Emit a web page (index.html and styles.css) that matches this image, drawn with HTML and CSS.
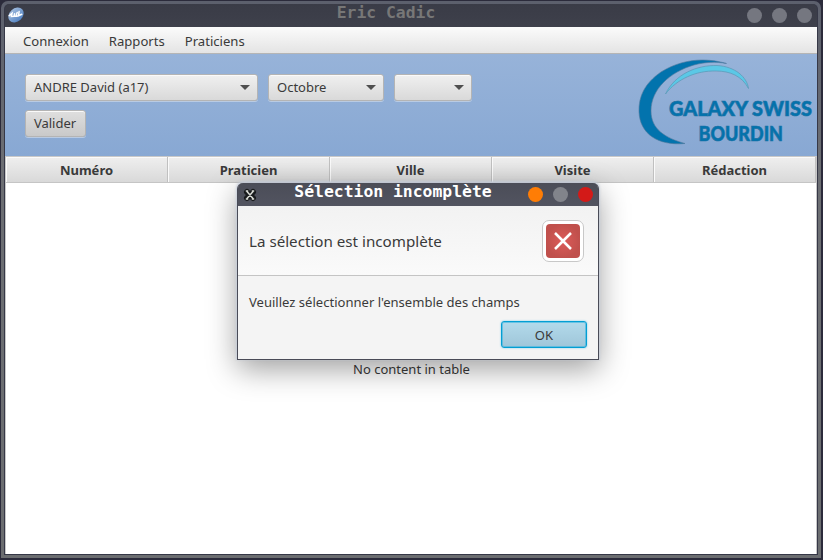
FILE: index.html
```html
<!DOCTYPE html>
<html lang="fr">
<head>
<meta charset="utf-8">
<title>Eric Cadic</title>
<link rel="stylesheet" href="styles.css">
</head>
<body>
<div class="window">
  <div class="frame">
    <header class="titlebar">
      <svg class="app-icon" width="16" height="16" viewBox="0 0 16 16"><defs><linearGradient id="globe" x2="0" y2="1"><stop offset="0" stop-color="#a0bbdd"/><stop offset="1" stop-color="#5484c4"/></linearGradient></defs><ellipse cx="8" cy="8" rx="8.5" ry="6.6" transform="rotate(-43 8 8)" fill="url(#globe)"/><path d="M1.2 8.6 4 6.3 3.4 9.500 6 9.200 6.600 6.800M6.300 9.300 8 9.100 9.200 5.400M8.400 9.300 10.500 8.800 11.100 4.600M11 8.500 13.800 7.200" fill="none" stroke="#fff" stroke-width="1.500" stroke-linecap="round"/></svg>
      <h1>Eric Cadic</h1>
      <div class="dots"><i></i><i></i><i></i></div>
    </header>
    <nav class="menu"><span>Connexion</span><span>Rapports</span><span>Praticiens</span></nav>
    <section class="toolbar">
      <div class="controls">
        <div class="row">
          <div class="combo visitor">ANDRE David (a17)</div>
          <div class="combo month">Octobre</div>
          <div class="combo year"></div>
        </div>
        <button class="btn">Valider</button>
      </div>
      <svg class="logo" width="180" height="90" viewBox="636 56 180 90">
        <path d="M726.5 63.500C704 57 681 59.500 661 72C645 83 638.500 96 639 112C640 134 658 146 685 143.500C665 138 651 129 651 111C651 89 670 72 694 65C705 62 716 61.500 726.500 63.500Z" fill="#0273ad" stroke="#50799c" stroke-width=".6"/>
        <path d="M665.500 94C675 74 697 65 717 65.500C735 66.500 747 77 748.500 88.500C742 76 730 71 716 71C696 70.500 677 79 665.500 94Z" fill="#5bc8e6" stroke="#5c97b5" stroke-width=".7"/>
        <text x="669" y="116.300" textLength="143" lengthAdjust="spacingAndGlyphs">GALAXY SWISS</text>
        <text x="698.500" y="140.500" textLength="84.500" lengthAdjust="spacingAndGlyphs">BOURDIN</text>
      </svg>
    </section>
    <section class="table">
      <div class="thead"><span>Numéro</span><span>Praticien</span><span>Ville</span><span>Visite</span><span>Rédaction</span></div>
      <div class="empty">No content in table</div>
    </section>
  </div>
</div>
<div class="dialog">
  <header class="dialog-title">
    <svg class="x-icon" width="14" height="14" viewBox="0 0 14 14"><path d="M4 4 10 10M10 4 4 10" stroke="#191b1d" stroke-width="6" stroke-linecap="round"/><path d="M4 3.500 10 10.500M10 3.500 4 10.500M2.800 3h2.400M8.800 3h2.400M2.800 11h2.400M8.800 11h2.400" stroke="#d9dbd5" stroke-width="1.500"/></svg>
    <h2>Sélection incomplète</h2>
    <div class="dots"><i class="orange"></i><i class="gray"></i><i class="red"></i></div>
  </header>
  <div class="dialog-head">
    <p>La sélection est incomplète</p>
    <svg width="42" height="42" viewBox="0 0 42 42"><defs><radialGradient id="err"><stop offset="0" stop-color="#dc5b59"/><stop offset="1" stop-color="#c0504c"/></radialGradient></defs><rect x=".5" y=".5" width="41" height="41" rx="6.500" fill="#fff" stroke="#c8c8c8"/><rect x="4" y="4" width="34" height="34" rx="4" fill="url(#err)"/><path d="M13 13 29 29M29 13 13 29" stroke="#fff" stroke-width="2.500"/></svg>
  </div>
  <div class="dialog-body">
    <p>Veuillez sélectionner l'ensemble des champs</p>
    <button class="ok">OK</button>
  </div>
</div>
</body>
</html>
```
FILE: styles.css
```css
* { box-sizing: border-box; }
body {
  margin: 0;
  width: 823px;
  height: 560px;
  padding: 1px 2px 2px 1px;
  overflow: hidden;
  background: #2b2b3b;
  font: 13px/18px "Noto Sans", sans-serif;
  color: #3a3a3a;
}
h1, h2, p { margin: 0; }
.window {
  height: 557px;
  width: 820px;
  padding: 3px;
  border-radius: 7px 7px 0 0;
  background: linear-gradient(#5c606d, #6c6e73 30%, #6b6d70);
}
.frame {
  height: 551px;
  width: 814px;
  padding: 0 1px 1px;
  border-radius: 5px 5px 0 0;
  background: #363847;
  display: flex;
  flex-direction: column;
}
.titlebar {
  height: 23px;
  display: grid;
  grid-template-columns: 80px 1fr 80px;
  background: linear-gradient(#3a3c47, #3e404b);
  border-radius: 5px 5px 0 0;
}
.app-icon { margin: 3px 0 0 3px; }
h1, h2 {
  font: bold 16.4px/18px "DejaVu Sans Mono", monospace;
  text-align: center;
  white-space: pre;
}
h1 { color: #777; margin-left: -50px; }
.dots { display: flex; justify-content: flex-end; gap: 10px; padding: 4px 5px 0 0; }
.dots i { width: 15px; height: 15px; border-radius: 50%; background: #757780; }
.menu {
  height: 27px;
  display: flex;
  gap: 20px;
  padding: 5px 18px 0;
  font-size: 13.1px;
  background: linear-gradient(#fbfbfb, #e4e4e4);
  border-bottom: 1px solid #b5b5b5;
}
.toolbar {
  height: 102px;
  display: flex;
  justify-content: space-between;
  padding: 2px 1px 0 20px;
  background: linear-gradient(#97b3d9, #88a8d3);
}
.controls { padding-top: 18px; display: flex; flex-direction: column; gap: 9px; align-items: flex-start; }
.row { display: flex; gap: 10px; }
.combo, .btn {
  height: 27px;
  border: 1px solid #b4b4b4;
  border-radius: 3px;
  background: linear-gradient(#f0f0f0, #d9d9d9);
  box-shadow: inset 0 1px #fafafa, 0 1px #b9cbe3;
  padding: 2px 8px 4px;
}
.combo { display: flex; justify-content: space-between; align-items: center; }
.combo::after { content: ""; margin: 2px -1px 0 auto; border: 5px solid transparent; border-top-color: #4f4f4f; border-bottom: 0; }
.visitor { width: 233px; }
.month { width: 116px; }
.year { width: 78px; }
.btn {
  font: inherit;
  line-height: 17px;
  color: inherit;
  width: 61px;
  padding: 0 1px 0 0;
  background: linear-gradient(#dfdfdf, #c9c9c9);
}
.logo text { font: 900 20.5px "Lato", sans-serif; fill: #0273ad; stroke: #1d72a5; stroke-width: .7px; }
.table {
  flex: 1;
  border: 1px solid #c8c8c8;
  border-bottom: 0;
  background: #fff;
}
.thead {
  height: 26px;
  display: flex;
  border-bottom: 1px solid #c5c5c5;
  background: linear-gradient(#efefef, #d9d9d9);
}
.thead span {
  width: 162px;
  padding-top: 4px;
  text-align: center;
  font-weight: bold;
  border-right: 1px solid #c0c0c0;
  box-shadow: inset 1px 1px #fafafa;
}
.empty { padding: 177px 0 0 1px; text-align: center; }
.dialog {
  position: absolute;
  left: 237px;
  top: 183px;
  width: 362px;
  height: 177px;
  border: 1px solid #494b57;
  border-top: 0;
  border-radius: 6px 6px 0 0;
  background: #f4f4f4;
  box-shadow: 0 -1px 2px 1px rgba(196, 204, 218, .8), 0 9px 30px rgba(0, 0, 0, .38);
}
.dialog-title {
  height: 23px;
  display: grid;
  grid-template-columns: 40px 1fr 80px;
  border-radius: 5px 5px 0 0;
  background: linear-gradient(#4b4d58, #525460);
  color: #fff;
}
.x-icon { margin: 5px 0 0 5px; }
h2 { margin-left: -10px; }
.orange.orange { background: #ff7d05; }
.gray.gray { background: #82848b; }
.red.red { background: #d31a18; }
.dialog-head {
  height: 70px;
  display: flex;
  justify-content: space-between;
  align-items: center;
  padding: 0 14px 0 11px;
  font-size: 15.17px;
  background: linear-gradient(#f2f2f2, #fafafa);
  border-bottom: 1px solid #c4c4c4;
}
.dialog-body {
  height: 83px;
  padding: 17px 11px 0;
  display: flex;
  flex-direction: column;
  gap: 11px;
  font-size: 13.05px;
}
.ok {
  align-self: flex-end;
  width: 86px;
  height: 27px;
  margin-top: -1px;
  padding: 0;
  font: inherit;
  color: #3a3a3a;
  border: 1px solid #039ed3;
  border-radius: 3px;
  background: linear-gradient(#b3daeb, #9fc6d9);
  box-shadow: inset 0 0 0 1px rgba(53, 180, 224, .6), 0 0 2px #70c8e8;
}
```
